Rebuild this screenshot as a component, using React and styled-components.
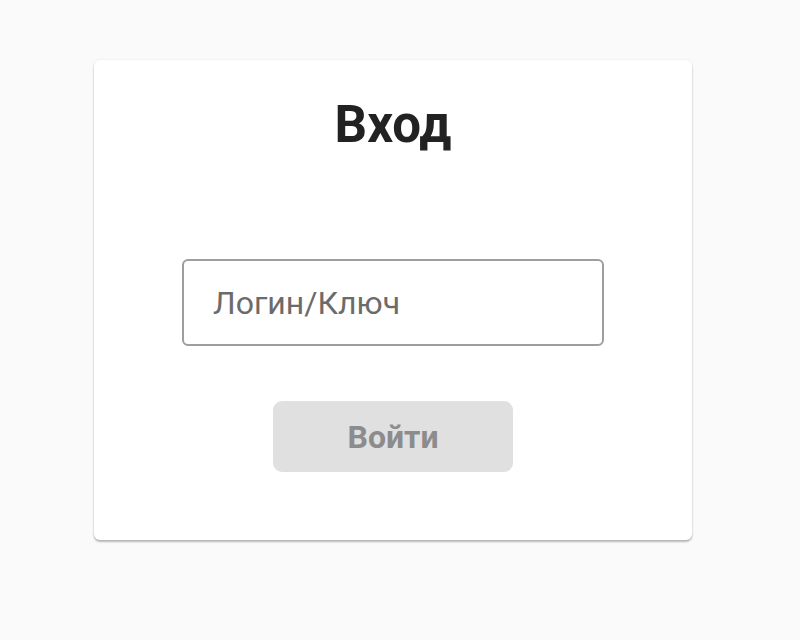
import React from "react";
import styled, { createGlobalStyle } from "styled-components";

const GlobalStyle = createGlobalStyle`
  html, body {
    margin: 0;
    padding: 0;
    background: #fafafa;
    font-family: Roboto, "Noto Sans", sans-serif;
  }
`;

const Page = styled.div`
  display: flex;
  justify-content: center;
  align-items: flex-start;
  padding: 60px 14px 0 0;
  min-height: 640px;
  box-sizing: border-box;
`;

const Card = styled.div`
  width: 598px;
  background: #ffffff;
  border-radius: 6px;
  box-shadow: 0 2px 2px rgba(0, 0, 0, 0.25), 0 0 3px rgba(0, 0, 0, 0.08);
  display: flex;
  flex-direction: column;
  align-items: center;
  padding: 36px 0 68px;
`;

const Heading = styled.h1`
  margin: 0;
  font-size: 51px;
  line-height: 58px;
  font-weight: 700;
  color: #222222;
`;

const Input = styled.input`
  margin-top: 105px;
  width: 422px;
  height: 87px;
  box-sizing: border-box;
  border: 2px solid #9e9e9e;
  border-radius: 6px;
  padding: 0 29px;
  font-family: Roboto, "Noto Sans", sans-serif;
  font-size: 32px;
  color: #333;
  outline: none;

  &::placeholder {
    color: #6b6b6b;
  }
`;

const Button = styled.button`
  margin-top: 55px;
  width: 240px;
  height: 71px;
  border: none;
  border-radius: 9px;
  background: #e0e0e0;
  color: #8c8c8c;
  font-family: Roboto, "Noto Sans", sans-serif;
  font-size: 32px;
  font-weight: 700;
  cursor: default;
`;

function App() {
  return (
    <>
      <GlobalStyle />
      <Page>
        <Card>
          <Heading>Вход</Heading>
          <Input placeholder="Логин/Ключ" />
          <Button disabled>Войти</Button>
        </Card>
      </Page>
    </>
  );
}

export default App;
